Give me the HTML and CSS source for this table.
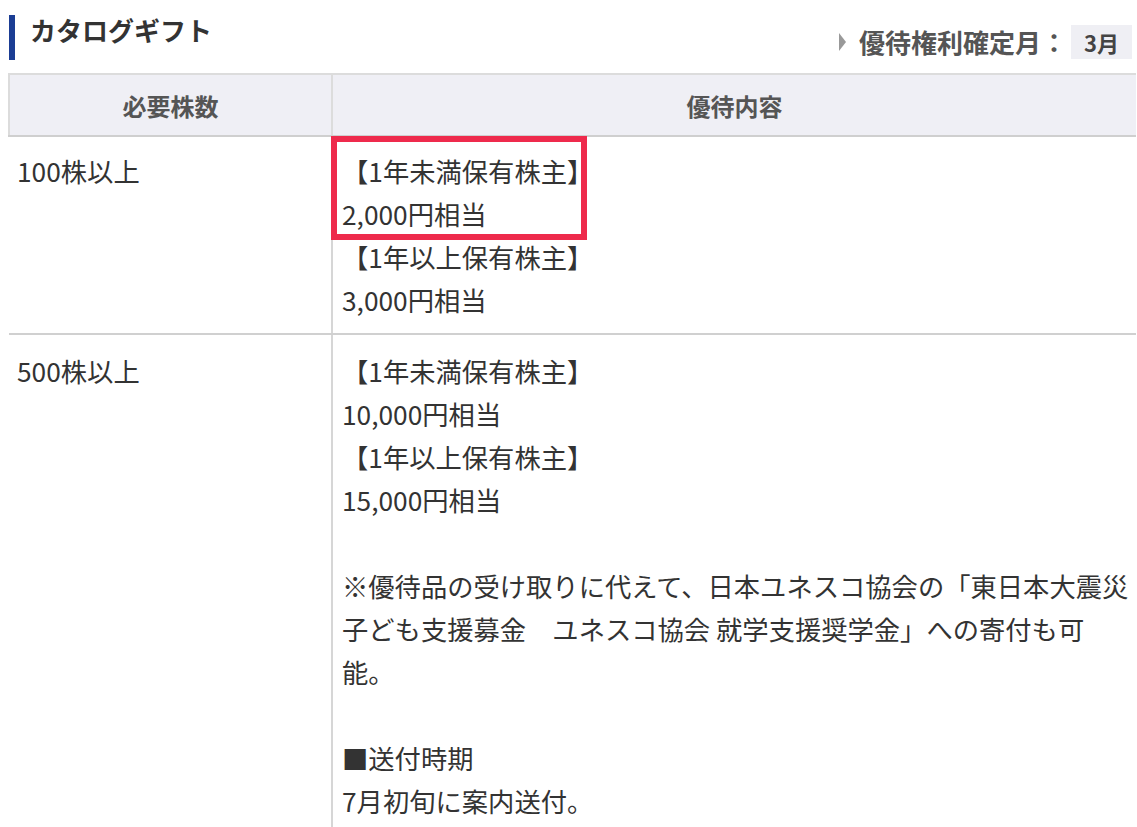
FILE: index.html
```html
<!DOCTYPE html>
<html lang="ja">
<head>
    <meta charset="UTF-8">
    <meta name="viewport" content="width=device-width, initial-scale=1.0">
    <title>カタログギフト</title>
    <link rel="stylesheet" href="styles.css">
</head>
<body>
    <div class="page">
        <div class="section-head">
            <h2 class="section-title">カタログギフト</h2>
            <div class="record-month">
                <span class="arrow"></span>
                <span class="record-label">優待権利確定月：</span>
                <span class="month">3月</span>
            </div>
        </div>

        <table class="benefit-table">
            <thead>
                <tr>
                    <th class="col-shares">必要株数</th>
                    <th>優待内容</th>
                </tr>
            </thead>
            <tbody>
                <tr>
                    <td>100株以上</td>
                    <td class="detail">
                        <div class="mark-box"></div>
                        【1年未満保有株主】<br>
                        2,000円相当<br>
                        【1年以上保有株主】<br>
                        3,000円相当
                    </td>
                </tr>
                <tr>
                    <td>500株以上</td>
                    <td class="detail">
                        【1年未満保有株主】<br>
                        10,000円相当<br>
                        【1年以上保有株主】<br>
                        15,000円相当<br>
                        <br>
                        ※優待品の受け取りに代えて、日本ユネスコ協会の「東日本大震災子ども支援募金　ユネスコ協会 就学支援奨学金」への寄付も可能。<br>
                        <br>
                        ■送付時期<br>
                        7月初旬に案内送付。
                    </td>
                </tr>
            </tbody>
        </table>
    </div>
</body>
</html>
```

FILE: styles.css
```css
body {
    margin: 0;
    font-family: "Noto Sans CJK JP", "Noto Sans", sans-serif;
    color: #333;
    background: #fff;
}
.page {
    padding: 0 1px 0 8px;
}
.section-head {
    display: flex;
    justify-content: space-between;
    align-items: flex-start;
    height: 73px;
}
.section-title {
    margin: 15px 0 0 1px;
    padding: 0 0 15px 15px;
    border-left: 6px solid #1b3d94;
    font-size: 26px;
    line-height: 30px;
    font-weight: bold;
    color: #333;
}
.record-month {
    display: flex;
    align-items: center;
    margin-top: 25px;
    margin-right: 4px;
    color: #555;
}
.arrow {
    width: 0;
    height: 0;
    border-top: 9px solid transparent;
    border-bottom: 9px solid transparent;
    border-left: 7px solid #999;
    margin-right: 13px;
}
.record-label {
    font-size: 26px;
    font-weight: bold;
    line-height: 34px;
}
.month {
    margin-left: 4px;
    background: #efeff4;
    font-size: 22px;
    font-weight: bold;
    line-height: 34px;
    padding: 0 13px 0 13px;
    color: #444;
}
.benefit-table {
    width: 100%;
    border-collapse: collapse;
    font-size: 26.3px;
    line-height: 43px;
}
.benefit-table th {
    background: #efeff5;
    color: #555;
    font-size: 24px;
    font-weight: bold;
    height: 60px;
    border-top: 2px solid #dcdcdc;
    border-bottom: 2px solid #cfcfcf;
    border-left: 2px solid #dcdcdc;
    padding: 0;
}
.benefit-table .col-shares {
    width: 321px;
}
.benefit-table td {
    vertical-align: top;
    padding: 12px 8px 12px 8px;
    border-bottom: 2px solid #d0d0d0;
}
.benefit-table td.detail {
    position: relative;
    border-left: 2px solid #d6d6d6;
    padding-left: 9px;
    padding-right: 2px;
}
.benefit-table tbody tr + tr td {
    padding-top: 14px;
}
.mark-box {
    position: absolute;
    left: -2px;
    top: -1px;
    width: 244px;
    height: 92px;
    border: 6px solid #ee2a4c;
}
```
